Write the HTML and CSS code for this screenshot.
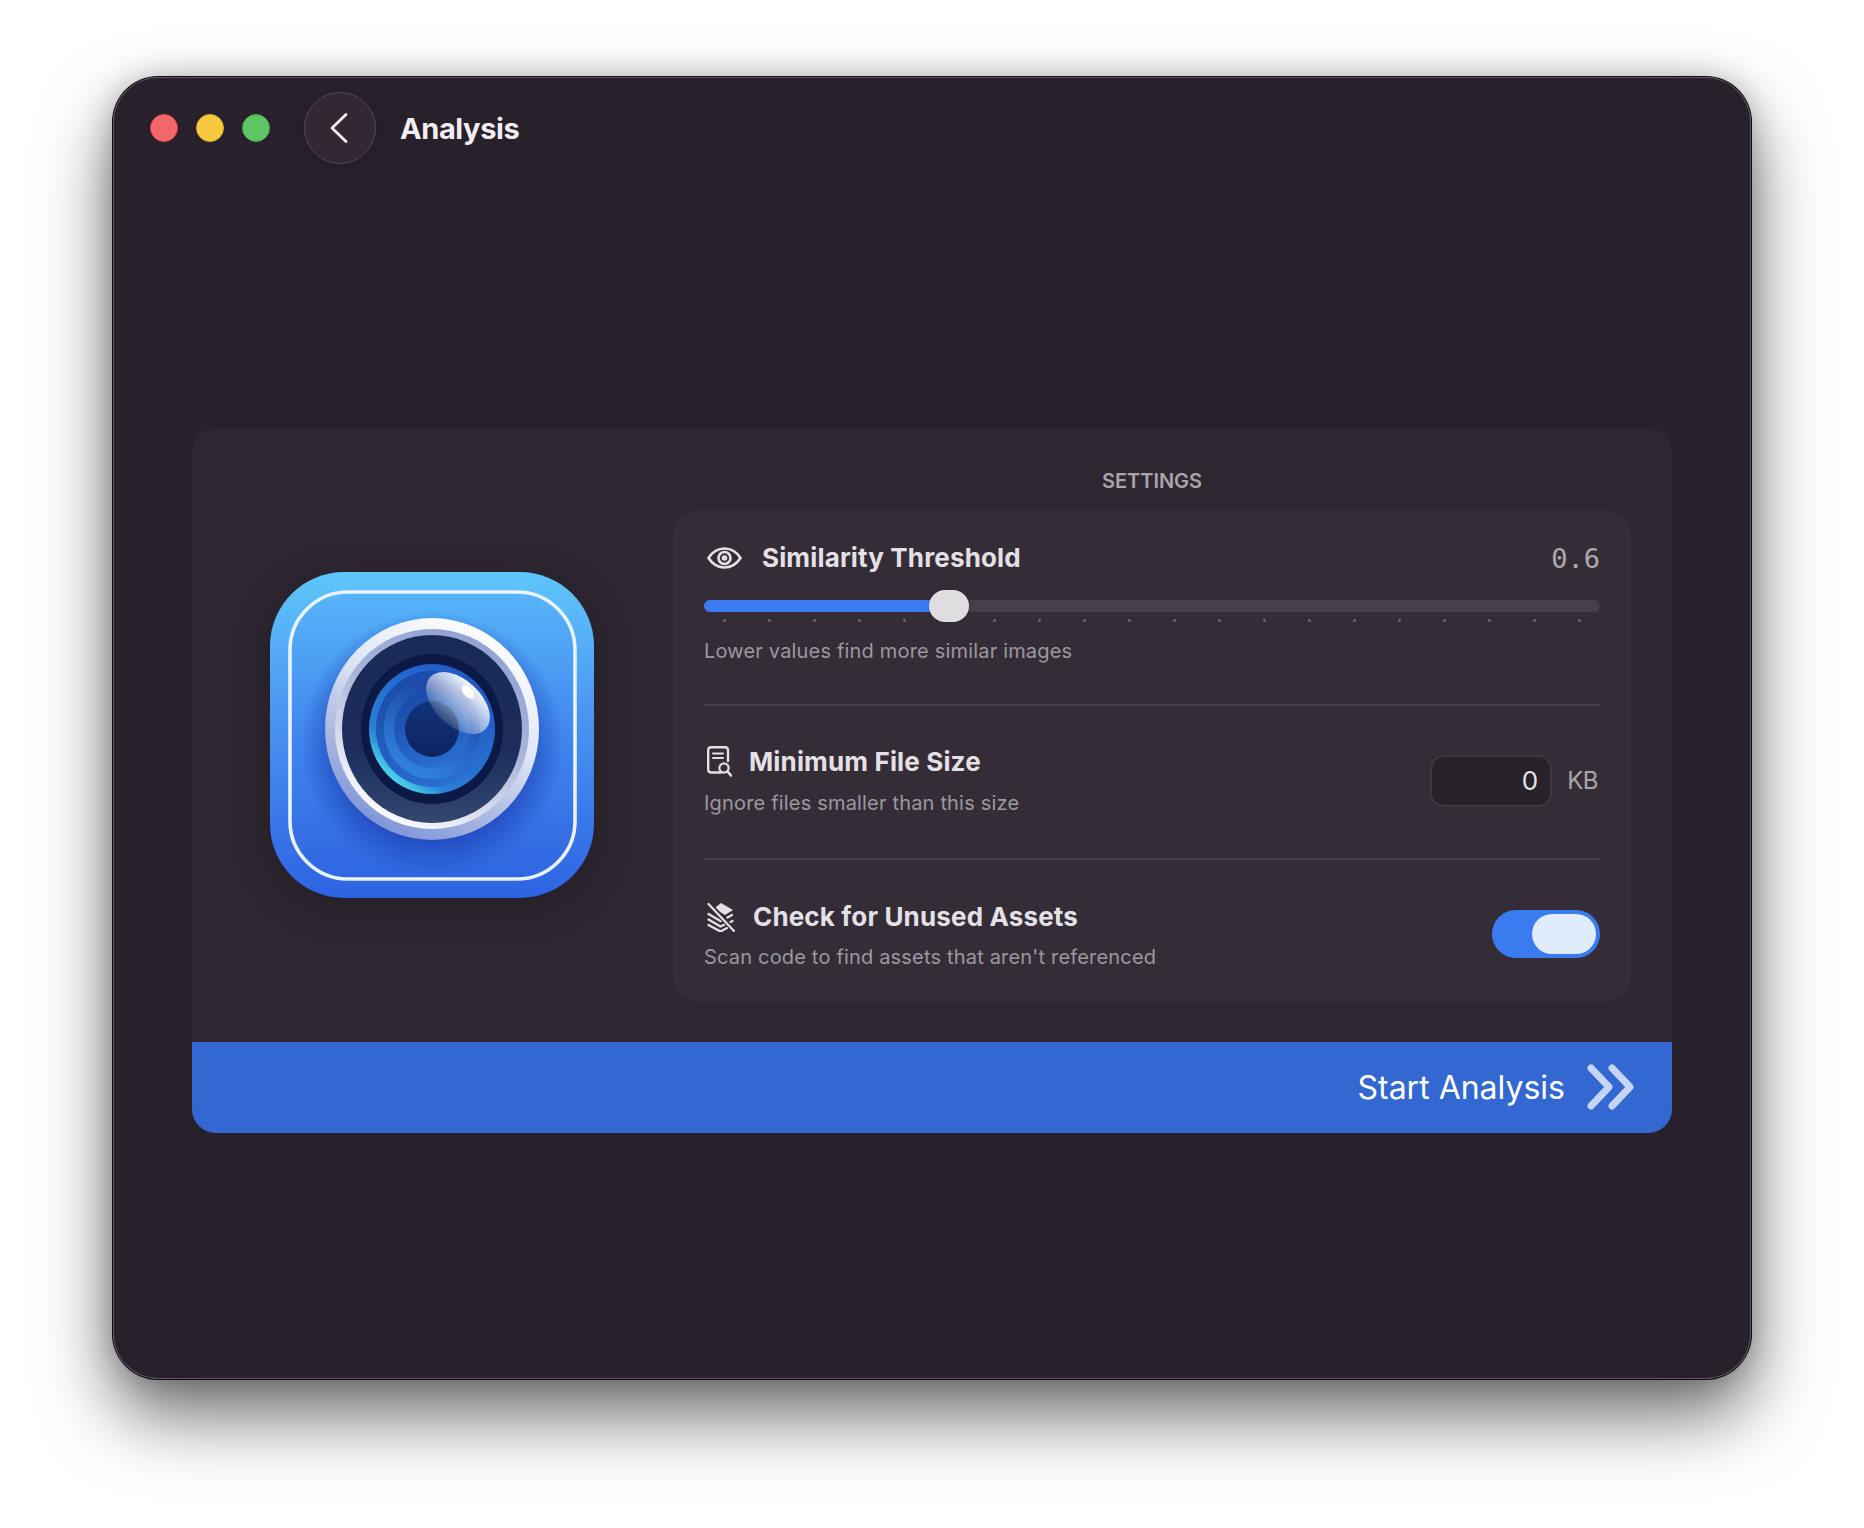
FILE: index.html
```html
<!DOCTYPE html>
<html lang="en">
<head>
    <meta charset="UTF-8">
    <title>Analysis</title>
    <link rel="stylesheet" href="styles.css">
</head>
<body>
    <div class="window">
        <header class="titlebar">
            <div class="lights">
                <span class="light red"></span>
                <span class="light yellow"></span>
                <span class="light green"></span>
            </div>
            <button class="back">
                <svg width="20" height="32" viewBox="0 0 20 32"><path d="M16 2.500 2 16l14 13.500" fill="none" stroke="#f1eff2" stroke-width="2.800" stroke-linecap="round" stroke-linejoin="round"/></svg>
            </button>
            <h1 class="title">Analysis</h1>
        </header>

        <main class="content">
            <section class="card">
                <div class="card-body">
                    <div class="icon-col">
                        <svg class="app-icon" width="324" height="326" viewBox="0 0 324 326">
                            <defs>
                                <linearGradient id="bg" x1="0" y1="0" x2="0" y2="1">
                                    <stop offset="0" stop-color="#5fc6fb"/>
                                    <stop offset="0.45" stop-color="#4a94f2"/>
                                    <stop offset="1" stop-color="#2d63e2"/>
                                </linearGradient>
                                <linearGradient id="inner" x1="0" y1="0" x2="0" y2="1">
                                    <stop offset="0" stop-color="#57b5f9"/>
                                    <stop offset="0.5" stop-color="#4187ee"/>
                                    <stop offset="1" stop-color="#2f66e0"/>
                                </linearGradient>
                                <linearGradient id="ring" x1="0.8" y1="0.05" x2="0.3" y2="1">
                                    <stop offset="0" stop-color="#ffffff"/>
                                    <stop offset="0.4" stop-color="#dfe6f6"/>
                                    <stop offset="0.7" stop-color="#aebbe2"/>
                                    <stop offset="1" stop-color="#7c92d8"/>
                                </linearGradient>
                                <linearGradient id="ring2" x1="0.8" y1="0" x2="0.3" y2="1">
                                    <stop offset="0" stop-color="#8ea0d4"/>
                                    <stop offset="0.45" stop-color="#a9b5d8"/>
                                    <stop offset="1" stop-color="#ffffff"/>
                                </linearGradient>
                                <linearGradient id="barrel" x1="0.5" y1="0" x2="0.5" y2="1">
                                    <stop offset="0" stop-color="#1a2a56"/>
                                    <stop offset="0.6" stop-color="#1c2d5c"/>
                                    <stop offset="1" stop-color="#33476f"/>
                                </linearGradient>
                                <linearGradient id="lens" x1="0.15" y1="0.9" x2="0.8" y2="0.1">
                                    <stop offset="0" stop-color="#52e4ef"/>
                                    <stop offset="0.22" stop-color="#2a80d6"/>
                                    <stop offset="1" stop-color="#2058c8"/>
                                </linearGradient>
                                <linearGradient id="lens2" x1="0.3" y1="0.9" x2="0.7" y2="0">
                                    <stop offset="0" stop-color="#2f7fdc"/>
                                    <stop offset="1" stop-color="#1b3f9e"/>
                                </linearGradient>
                                <linearGradient id="lens3" x1="0.7" y1="1" x2="0.3" y2="0">
                                    <stop offset="0" stop-color="#2a70d2"/>
                                    <stop offset="1" stop-color="#1a4aa8"/>
                                </linearGradient>
                                <linearGradient id="pupil" x1="0.5" y1="0" x2="0.5" y2="1">
                                    <stop offset="0" stop-color="#123479"/>
                                    <stop offset="1" stop-color="#0c2463"/>
                                </linearGradient>
                                <linearGradient id="glare" x1="0.5" y1="0" x2="0.5" y2="1">
                                    <stop offset="0" stop-color="#ffffff" stop-opacity="0.95"/>
                                    <stop offset="0.55" stop-color="#ffffff" stop-opacity="0.5"/>
                                    <stop offset="1" stop-color="#ffffff" stop-opacity="0.12"/>
                                </linearGradient>
                                <radialGradient id="cast" cx="0.5" cy="0.5" r="0.5">
                                    <stop offset="0.7" stop-color="#1a3bb0" stop-opacity="0.7"/>
                                    <stop offset="1" stop-color="#1a3bb0" stop-opacity="0"/>
                                </radialGradient>
                            </defs>
                            <rect width="324" height="326" rx="74" fill="url(#bg)"/>
                            <rect x="20" y="20" width="285" height="287" rx="58" fill="url(#inner)" stroke="#e9f2fd" stroke-width="3.600"/>
                            <circle cx="162" cy="172" r="132" fill="url(#cast)"/>
                            <ellipse cx="162" cy="157" rx="107" ry="111" fill="url(#ring)"/>
                            <ellipse cx="162" cy="157" rx="97" ry="100" fill="url(#ring2)"/>
                            <ellipse cx="162" cy="157" rx="90" ry="94" fill="url(#barrel)"/>
                            <ellipse cx="162" cy="157" rx="71" ry="75" fill="#0a1a45"/>
                            <ellipse cx="162" cy="157" rx="63" ry="65" fill="url(#lens)"/>
                            <ellipse cx="162" cy="157" rx="56" ry="58" fill="url(#lens3)"/>
                            <ellipse cx="162" cy="157" rx="48" ry="50" fill="url(#lens2)"/>
                            <ellipse cx="162" cy="157" rx="38" ry="39" fill="url(#lens3)"/>
                            <ellipse cx="162" cy="157" rx="27" ry="28" fill="url(#pupil)"/>
                            <g transform="translate(188 131) rotate(43)">
                                <ellipse rx="38" ry="23" fill="url(#glare)"/>
                            </g>
                            <ellipse cx="198" cy="120" rx="8" ry="4.500" transform="rotate(48 198 120)" fill="#ffffff"/>
                        </svg>
                    </div>
                    <div class="settings-col">
                        <div class="settings-label">SETTINGS</div>
                        <div class="panel">
                            <div class="row row-slider">
                                <div class="row-head">
                                    <div class="row-title title-eye">
                                        <svg width="35" height="22" viewBox="0 0 35 22"><path d="M1.500 11C5.500 4.800 11 1.500 17.500 1.500S29.500 4.800 33.500 11C29.500 17.200 24 20.500 17.500 20.500S5.500 17.200 1.500 11Z" fill="none" stroke="#e3e1e5" stroke-width="2.700" stroke-linejoin="round"/><circle cx="17.500" cy="11" r="6" fill="none" stroke="#e3e1e5" stroke-width="2.600"/><circle cx="17.500" cy="11" r="2.800" fill="#e3e1e5"/></svg>
                                        <span>Similarity Threshold</span>
                                    </div>
                                    <span class="value">0.6</span>
                                </div>
                                <div class="slider">
                                    <div class="slider-fill"></div>
                                    <div class="slider-thumb"></div>
                                </div>
                                <div class="ticks">
                                    <i></i><i></i><i></i><i></i><i></i><i></i><i></i><i></i><i></i><i></i>
                                    <i></i><i></i><i></i><i></i><i></i><i></i><i></i><i></i><i></i><i></i>
                                </div>
                                <p class="row-sub slider-sub">Lower values find more similar images</p>
                            </div>

                            <div class="row row-size">
                                <div>
                                    <div class="row-title title-file">
                                        <svg width="25" height="31" viewBox="0 0 25 31"><path d="M14 26.500H4A3 3 0 0 1 1.200 23.500V4A3 3 0 0 1 4 1.200H18A3 3 0 0 1 21 4V15" fill="none" stroke="#e3e1e5" stroke-width="2.400" stroke-linecap="round"/><path d="M6 7.500H16M6 12H16" fill="none" stroke="#e3e1e5" stroke-width="2" stroke-linecap="round"/><circle cx="17" cy="22" r="4.600" fill="none" stroke="#e3e1e5" stroke-width="2.200"/><path d="M20.500 25.500 24 29.500" stroke="#e3e1e5" stroke-width="2.600" stroke-linecap="round"/></svg>
                                        <span>Minimum File Size</span>
                                    </div>
                                    <p class="row-sub">Ignore files smaller than this size</p>
                                </div>
                                <div class="size-input">
                                    <div class="input-box">0</div>
                                    <span class="unit">KB</span>
                                </div>
                            </div>

                            <div class="row row-unused">
                                <div>
                                    <div class="row-title title-stack">
                                        <svg width="28" height="30" viewBox="0 0 28 30"><path d="M14 1 26 8 18 13 7 6.500Z" fill="#e3e1e5"/><path d="M1.500 12 13.500 19 15.500 18M25 13 20.500 15.500M1.500 17.500 13.500 24.500 18.500 22M25.500 19 22 21M1.500 23 13.500 29.500 20 26" fill="none" stroke="#e3e1e5" stroke-width="2.300" stroke-linecap="round" stroke-linejoin="round"/><path d="M1.500 1.500 27 28.500" stroke="#342d38" stroke-width="5"/><path d="M1.500 2 27 29" stroke="#e3e1e5" stroke-width="2.200" stroke-linecap="round"/></svg>
                                        <span>Check for Unused Assets</span>
                                    </div>
                                    <p class="row-sub">Scan code to find assets that aren't referenced</p>
                                </div>
                                <div class="toggle"><div class="toggle-knob"></div></div>
                            </div>
                        </div>
                    </div>
                </div>
                <button class="start">
                    <span>Start Analysis</span>
                    <svg width="48" height="46" viewBox="0 0 48 46"><path d="M4 4 22 23 4 42M25 4 43 23 25 42" fill="none" stroke="#c6d5f5" stroke-width="7" stroke-linecap="round" stroke-linejoin="round"/></svg>
                </button>
            </section>
        </main>
    </div>
</body>
</html>
```

FILE: styles.css
```css
* {
    box-sizing: border-box;
}
body {
    margin: 0;
    width: 1864px;
    height: 1528px;
    padding: 77px 113px 149px;
    background-color: #ffffff;
    font-family: Inter, "Noto Sans", sans-serif;
    overflow: hidden;
}
.window {
    height: 100%;
    display: flex;
    flex-direction: column;
    background-color: #28202b;
    border-radius: 45px;
    box-shadow: inset 0 0 0 1px #5d5862, 0 0 0 1px #0c0a0c, 0 36px 72px rgba(0, 0, 0, 0.58), 0 0 30px rgba(0, 0, 0, 0.22);
}

/* title bar */
.titlebar {
    height: 104px;
    padding: 0 0 2px 37px;
    display: flex;
    align-items: center;
    flex-shrink: 0;
}
.lights {
    display: flex;
    gap: 18px;
}
.light {
    width: 28px;
    height: 28px;
    border-radius: 50%;
    border: 1px solid transparent;
}
.red {
    background-color: #f2686a;
    border-color: #dd4b4e;
}
.yellow {
    background-color: #f5ca41;
    border-color: #dfae2a;
}
.green {
    background-color: #5fc563;
    border-color: #43ac48;
}
.back {
    width: 72px;
    height: 72px;
    margin-left: 34px;
    padding: 0;
    display: flex;
    align-items: center;
    justify-content: center;
    background-color: #322733;
    border: 1px solid #544560;
    border-radius: 50%;
    box-shadow: 0 2px 12px rgba(0, 0, 0, 0.14);
}
.title {
    margin: 0 0 0 24px;
    color: #f1eff2;
    font-size: 29px;
    font-weight: 700;
    letter-spacing: -0.4px;
}

/* main card */
.content {
    flex: 1;
    padding: 0 79px;
    display: flex;
    align-items: center;
}
.card {
    width: 100%;
    background-color: #2e2732;
    border-radius: 24px;
    overflow: hidden;
}
.card-body {
    display: flex;
    padding: 38px 41px 41px 0;
}
.icon-col {
    flex: 1;
    padding: 0 2px 0 0;
    display: flex;
    align-items: center;
    justify-content: center;
}
.app-icon {
    margin-top: 3px;
    filter: drop-shadow(0 8px 18px rgba(0, 0, 0, 0.28));
}
.settings-col {
    width: 958px;
}
.settings-label {
    height: 44px;
    line-height: 30px;
    text-align: center;
    color: #a8a4ab;
    font-size: 20px;
    font-weight: 600;
}

/* settings panel */
.panel {
    padding: 0 31px;
    background-color: #342d38;
    border-radius: 24px;
}
.row + .row {
    border-top: 2px solid #453f48;
}
.row-slider {
    height: 194px;
    padding-top: 30px;
}
.row-size {
    height: 154px;
    padding-top: 38px;
    display: flex;
    justify-content: space-between;
}
.row-unused {
    height: 143px;
    padding-top: 39px;
    display: flex;
    justify-content: space-between;
}
.row-head {
    display: flex;
    justify-content: space-between;
    align-items: center;
}
.row-title {
    display: flex;
    align-items: center;
    height: 36px;
    color: #e3e1e5;
    font-size: 26px;
    font-weight: 700;
    letter-spacing: 0.15px;
}
.row-title svg {
    margin-left: 3px;
}
.title-eye {
    gap: 20px;
}
.title-file {
    gap: 17px;
}
.title-stack {
    gap: 18px;
}
.value {
    color: #aeaab1;
    font-family: "DejaVu Sans Mono", monospace;
    font-size: 27px;
    padding-top: 2px;
}
.row-sub {
    margin: 10px 0 0;
    line-height: 26px;
    color: #9c989f;
    font-size: 20px;
    letter-spacing: 0.18px;
}
.row-unused .row-sub {
    margin-top: 9px;
}
.row-slider .slider-sub {
    margin-top: 16px;
}

/* slider */
.slider {
    position: relative;
    height: 12px;
    margin-top: 24px;
    background-color: #473f49;
    border-radius: 6px;
}
.slider-fill {
    width: 240px;
    height: 100%;
    background-color: #3a7bf3;
    border-radius: 6px 0 0 6px;
}
.slider-thumb {
    position: absolute;
    left: 225px;
    top: -10px;
    width: 40px;
    height: 32px;
    background-color: #e0dde1;
    border-radius: 16px;
    box-shadow: 0 1px 5px rgba(0, 0, 0, 0.15);
}
.ticks {
    display: flex;
    justify-content: space-between;
    margin-top: 7px;
    padding: 0 18.5px;
}
.ticks i {
    width: 3px;
    height: 3px;
    border-radius: 50%;
    background-color: #6b666e;
}

/* min size */
.size-input {
    display: flex;
    align-items: center;
    gap: 15px;
    height: 52px;
    margin: 11px 2px 0 0;
}
.input-box {
    width: 122px;
    height: 52px;
    padding-right: 12px;
    text-align: right;
    line-height: 48px;
    color: #e3e1e5;
    font-size: 26px;
    background-color: #282129;
    border: 2px solid #3d3740;
    border-radius: 14px;
}
.unit {
    color: #a8a4ab;
    font-size: 24px;
    letter-spacing: -0.5px;
}

/* toggle */
.toggle {
    width: 108px;
    height: 48px;
    margin-top: 11px;
    padding: 4px;
    display: flex;
    justify-content: flex-end;
    background-color: #3a7bf0;
    border-radius: 24px;
}
.toggle-knob {
    width: 64px;
    height: 40px;
    background-color: #e0ebfc;
    border-radius: 20px;
}

/* start button */
.start {
    width: 100%;
    height: 91px;
    padding: 0 37px 0 0;
    display: flex;
    align-items: center;
    justify-content: flex-end;
    gap: 22px;
    color: #ffffff;
    font-family: inherit;
    font-size: 32px;
    background-color: #3367d1;
    border: none;
}
```
